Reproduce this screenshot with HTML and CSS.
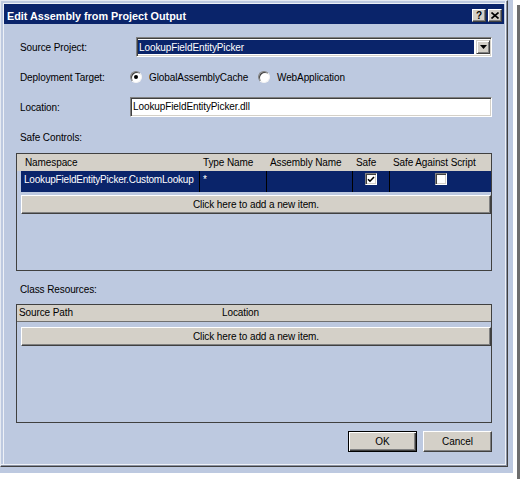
FILE: index.html
```html
<!DOCTYPE html>
<html>
<head>
<meta charset="utf-8">
<title>Edit Assembly from Project Output</title>
<link rel="stylesheet" href="styles.css">
</head>
<body>
<div class="shot">
  <div class="dialog">
    <div class="titlebar">
      <span class="title">Edit Assembly from Project Output</span>
      <div class="tbtns">
        <span class="tbtn help">?</span>
        <span class="tbtn close"><svg width="8" height="7" viewBox="0 0 8 7"><path d="M0.5 0.5 L7.5 6.5 M7.5 0.5 L0.5 6.5" stroke="#000" stroke-width="1.6" fill="none"/></svg></span>
      </div>
    </div>
    <div class="content">
      <div class="form">
        <span class="lbl">Source Project:</span>
        <div class="combo">
          <div class="combo-text">LookupFieldEntityPicker</div>
          <div class="combo-btn"><svg width="7" height="4" viewBox="0 0 7 4"><path d="M0 0 H7 L3.5 4 Z" fill="#000"/></svg></div>
        </div>
        <span class="lbl">Deployment Target:</span>
        <div class="radios">
          <span class="opt opt-first"><span class="radio checked"></span>GlobalAssemblyCache</span>
          <span class="opt"><span class="radio"></span>WebApplication</span>
        </div>
        <span class="lbl">Location:</span>
        <div class="textbox">LookupFieldEntityPicker.dll</div>
      </div>

      <div class="section section-first">Safe Controls:</div>
      <div class="grid grid-safe">
        <div class="cols ghead">
          <span class="rh"></span>
          <span class="hc hc-first">Namespace</span>
          <span class="hc">Type Name</span>
          <span class="hc">Assembly Name</span>
          <span class="hc">Safe</span>
          <span class="hc">Safe Against Script</span>
        </div>
        <div class="cols grow">
          <span class="rh"></span>
          <span class="dc dc-first">LookupFieldEntityPicker.CustomLookup</span>
          <span class="dc">*</span>
          <span class="dc"></span>
          <span class="dc dc-check"><span class="check"><svg width="8" height="7" viewBox="0 0 8 7"><path d="M1 3.2 L3 5.2 L7 1" stroke="#000" stroke-width="1.6" fill="none"/></svg></span></span>
          <span class="dc dc-check dc-last"><span class="check"></span></span>
        </div>
        <div class="addrow">Click here to add a new item.</div>
      </div>

      <div class="section section-second">Class Resources:</div>
      <div class="grid grid-res">
        <div class="lhead">
          <span class="lc lc-first">Source Path</span>
          <span class="lc">Location</span>
        </div>
        <div class="addrow addrow-res">Click here to add a new item.</div>
      </div>

      <div class="actions">
        <button class="btn btn-default">OK</button>
        <button class="btn">Cancel</button>
      </div>
    </div>
  </div>
</div>
</body>
</html>
```

FILE: styles.css
```css
html, body {
  margin: 0;
  padding: 0;
  background: #ffffff;
}

body {
  font-family: "Liberation Sans", Arial, sans-serif;
  font-size: 10px;
  letter-spacing: -0.1px;
  color: #000;
}

.shot {
  width: 513px;
  height: 473px;
  background: #bdc9e0;
  border-right: 4px solid #ffffff;
  border-bottom: 6px solid #ffffff;
  box-shadow: 3px 5px 0 #6e6e6e;
}

.dialog {
  width: 508px;
  height: 467px;
  box-sizing: border-box;
  border: 1px solid;
  border-color: #e6eaf2 #404040 #404040 #e6eaf2;
  box-shadow: inset -1px -1px 0 #8a92a4, inset -2px -2px 0 #eef1f7, inset 2px 2px 0 #bdc9e0, inset 3px 3px 0 #eef1f7;
  padding: 3px;
  display: flex;
  flex-direction: column;
}

/* title bar */
.titlebar {
  height: 20px;
  box-sizing: border-box;
  padding: 3px 2px 0 3px;
  background: #0a246a;
  display: flex;
  align-items: center;
  justify-content: space-between;
}

.title {
  color: #fff;
  font-weight: bold;
  font-size: 10.8px;
  letter-spacing: 0;
  line-height: 14px;
}

.tbtns {
  display: flex;
  gap: 2px;
}

.tbtn {
  width: 14px;
  height: 13px;
  box-sizing: border-box;
  background: #d4d0c8;
  border: 1px solid;
  border-color: #ffffff #404040 #404040 #ffffff;
  box-shadow: inset -1px -1px 0 #808080;
  display: flex;
  align-items: center;
  justify-content: center;
  font-weight: bold;
  font-size: 10px;
  line-height: 10px;
}

/* content */
.content {
  flex: 1;
  padding: 13px 12px 0 12px;
  display: flex;
  flex-direction: column;
}

.form {
  display: grid;
  grid-template-columns: 114px 1fr;
  grid-auto-rows: 20px;
  row-gap: 10px;
  align-items: center;
}

.lbl {
  padding-left: 4px;
}

.combo {
  margin-left: 6px;
  height: 20px;
  box-sizing: border-box;
  border: 1px solid;
  border-color: #808080 #ffffff #ffffff #808080;
  box-shadow: inset 1px 1px 0 #404040, inset -1px -1px 0 #d4d0c8;
  background: #fff;
  padding: 2px 1px;
  display: flex;
  gap: 2px;
}

.combo-text {
  flex: 1;
  background: #0a246a;
  color: #fff;
  line-height: 16px;
  padding-left: 1px;
}

.combo-btn {
  width: 14px;
  box-sizing: border-box;
  background: #d4d0c8;
  border: 1px solid;
  border-color: #d4d0c8 #404040 #404040 #d4d0c8;
  box-shadow: inset 1px 1px 0 #ffffff, inset -1px -1px 0 #808080;
  display: flex;
  align-items: center;
  justify-content: center;
}

.radios {
  display: flex;
  align-items: center;
}

.opt {
  display: flex;
  align-items: center;
  gap: 7px;
}

.opt-first {
  width: 128px;
}

.radio {
  width: 12px;
  height: 12px;
  box-sizing: border-box;
  border-radius: 50%;
  background: #fff;
  border: 1px solid;
  border-color: #808080 #f4f4f4 #f4f4f4 #808080;
  box-shadow: inset 1px 1px 0 #404040;
  display: flex;
  align-items: center;
  justify-content: center;
}

.radio.checked::after {
  content: "";
  width: 4px;
  height: 4px;
  border-radius: 50%;
  background: #000;
}

.textbox {
  height: 20px;
  box-sizing: border-box;
  border: 1px solid;
  border-color: #808080 #ffffff #ffffff #808080;
  box-shadow: inset 1px 1px 0 #404040, inset -1px -1px 0 #d4d0c8;
  background: #fff;
  padding-left: 2px;
  line-height: 18px;
}

.section {
  line-height: 14px;
  padding-left: 4px;
}

.section-first {
  margin-top: 14px;
}

.section-second {
  margin-top: 12px;
}

.grid {
  box-sizing: border-box;
  border: 1px solid #404040;
  display: flex;
  flex-direction: column;
}

.grid-safe {
  margin-top: 8px;
  height: 118px;
}

.grid-res {
  margin-top: 7px;
  height: 119px;
}

.cols {
  display: grid;
  grid-template-columns: 4px 179px 67px 86px 37px 1fr;
}

.ghead {
  height: 17px;
  background: #d4d0c8;
  line-height: 17px;
}

.hc {
  padding-left: 3px;
  white-space: nowrap;
}

.hc-first {
  padding-left: 4px;
}

.grow {
  height: 21px;
}

.dc {
  background: #0a246a;
  color: #fff;
  line-height: 17px;
  padding-left: 3px;
  border-right: 1px solid #000;
  white-space: nowrap;
  overflow: hidden;
}

.dc-first {
  padding-left: 3px;
  letter-spacing: -0.2px;
}

.dc-last {
  border-right: none;
}

.dc-check {
  padding-left: 0;
  display: flex;
  justify-content: center;
  align-items: flex-start;
}

.check {
  margin-top: 2px;
  width: 12px;
  height: 12px;
  box-sizing: border-box;
  background: #fff;
  border: 1px solid;
  border-color: #808080 #ffffff #ffffff #808080;
  box-shadow: inset 1px 1px 0 #404040, inset -1px -1px 0 #d4d0c8;
  display: flex;
  align-items: center;
  justify-content: center;
}

.addrow {
  margin: 3px 0 0 4px;
  height: 19px;
  box-sizing: border-box;
  background: #d4d0c8;
  border: 1px solid;
  border-color: #ffffff #404040 #404040 #ffffff;
  box-shadow: inset -1px -1px 0 #808080;
  text-align: center;
  line-height: 17px;
}

.lhead {
  height: 17px;
  box-sizing: border-box;
  background: #d4d0c8;
  border-bottom: 1px solid #707070;
  display: grid;
  grid-template-columns: 203px 1fr;
  line-height: 16px;
}

.lc {
  padding-left: 2px;
}

.addrow-res {
  margin-top: 5px;
}

.actions {
  margin-top: 8px;
  display: flex;
  justify-content: flex-end;
  gap: 6px;
}

.btn {
  width: 69px;
  height: 21px;
  box-sizing: border-box;
  margin: 0;
  padding: 0;
  font: inherit;
  color: #000;
  background: #d4d0c8;
  border: 1px solid;
  border-color: #ffffff #404040 #404040 #ffffff;
  box-shadow: inset -1px -1px 0 #808080;
}

.btn-default {
  border-color: #000;
  box-shadow: inset 1px 1px 0 #ffffff, inset -1px -1px 0 #404040, inset -2px -2px 0 #808080;
}
```
